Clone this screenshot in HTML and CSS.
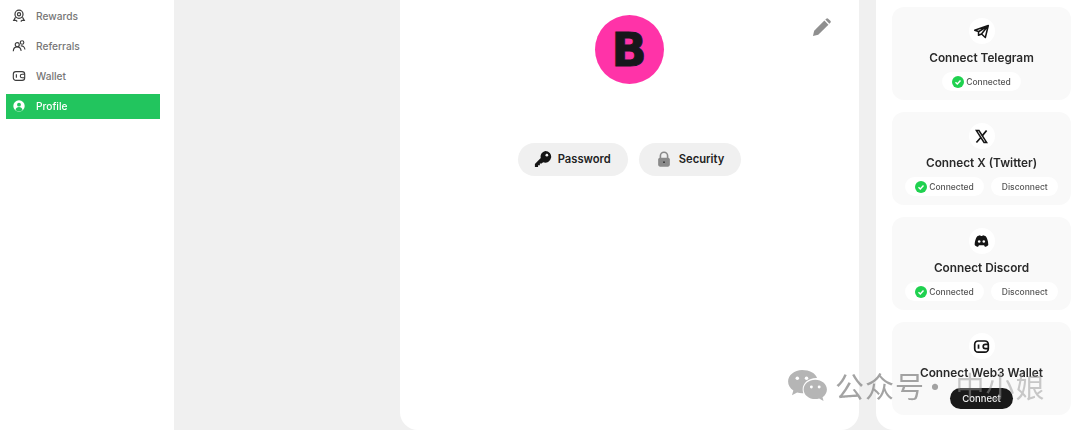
FILE: index.html
```html
<!DOCTYPE html>
<html lang="en">
<head>
  <meta charset="UTF-8">
  <meta name="viewport" content="width=device-width, initial-scale=1.0">
  <title>Profile</title>
  <link rel="stylesheet" href="styles.css">
</head>

<body>
  <div class="page">
    <nav class="sidebar">
      <a class="nav-item">
        <svg class="nav-icon" viewBox="0 0 16 16" fill="none" stroke="#3c3c3c" stroke-width="1.4"><circle cx="8" cy="6" r="4.6"/><circle cx="8" cy="6" r="1.8"/><path d="M4 9.5 2 13h2.5L6 14.3M12 9.5l2 3.5h-2.5L10 14.3"/></svg>
        Rewards
      </a>
      <a class="nav-item">
        <svg class="nav-icon" viewBox="0 0 16 16" fill="none" stroke="#3c3c3c" stroke-width="1.3"><circle cx="6" cy="6.5" r="2.3"/><circle cx="11.5" cy="4" r="2"/><path d="M1.5 14c0-3.5 2-5 4.5-5s4 1.5 4.500 4.500M10 8c2.500-.5 4.500 1 4.800 4"/></svg>
        Referrals
      </a>
      <a class="nav-item">
        <svg class="nav-icon" viewBox="0 0 16 16" fill="none" stroke="#3c3c3c" stroke-width="1.3"><rect x="1.500" y="3" width="13" height="10" rx="3"/><path d="M5 6v4M14.500 6h-3a2 2 0 0 0 0 4h3"/></svg>
        Wallet
      </a>
      <a class="nav-item active">
        <svg class="nav-icon" viewBox="0 0 16 16"><circle cx="8" cy="8" r="6.500" fill="#fff"/><circle cx="8" cy="6.500" r="2.200" fill="#22c55e"/><path d="M4 12.500c.5-2.500 2-3.300 4-3.300s3.500.8 4 3.300a6 6 0 0 1-8 0z" fill="#22c55e"/></svg>
        Profile
      </a>
    </nav>

    <main class="content">
      <svg class="edit-icon" viewBox="0 0 20 20"><path d="M1 19l1.300-5.600L13 2.700l4.300 4.300L6.600 17.700z" fill="#8f8f8f"/><path d="M14 1.700l1-1a1.400 1.400 0 0 1 2 0l2.300 2.300a1.400 1.400 0 0 1 0 2l-1 1z" fill="#8f8f8f"/></svg>
      <div class="avatar"><span>B</span></div>
      <div class="tab-row">
        <button class="tab">
          <svg class="tab-icon" viewBox="0 0 20 20"><path d="M12.500 1a6.500 6.500 0 1 1-2.400 12.500L8.500 15H6.500v2h-2v2H1v-3.500l6.500-6.500A6.500 6.500 0 0 1 12.500 1z" fill="#151515"/><circle cx="14.300" cy="5.700" r="1.500" fill="#f0f0f0"/></svg>
          Password
        </button>
        <button class="tab">
          <svg class="tab-icon" viewBox="0 0 20 20"><path d="M6 9V6.500a4 4 0 0 1 8 0V9" fill="none" stroke="#8a8a8a" stroke-width="1.800"/><rect x="3.500" y="8.500" width="13" height="10" rx="2" fill="#8a8a8a"/><circle cx="10" cy="13.500" r="1" fill="#333"/></svg>
          Security
        </button>
      </div>
    </main>

    <aside class="connections">
      <section class="card">
        <div class="card-icon">
          <svg viewBox="0 0 20 20" fill="none" stroke="#151515" stroke-width="1.800" stroke-linejoin="round"><path d="M2 8.500 18 3l-3.500 14-4.500-4-3.500 1.500V10zM7 10l11-7-8 10"/></svg>
        </div>
        <h3>Connect Telegram</h3>
        <div class="card-actions">
          <span class="pill"><i class="check"><svg viewBox="0 0 12 12" fill="none" stroke="#fff" stroke-width="1.400"><path d="M3.500 6.200 5.300 8l3.200-3.500"/></svg></i>Connected</span>
        </div>
      </section>

      <section class="card">
        <div class="card-icon">
          <svg viewBox="0 0 20 20" fill="none" stroke="#151515"><path d="M4 3h3l9 14h-3z" stroke-width="1.800"/><path d="M16 3l-5 6M9 11.500 4 17" stroke-width="2"/></svg>
        </div>
        <h3>Connect X (Twitter)</h3>
        <div class="card-actions">
          <span class="pill"><i class="check"><svg viewBox="0 0 12 12" fill="none" stroke="#fff" stroke-width="1.400"><path d="M3.500 6.200 5.300 8l3.200-3.500"/></svg></i>Connected</span>
          <span class="pill">Disconnect</span>
        </div>
      </section>

      <section class="card">
        <div class="card-icon">
          <svg viewBox="0 0 20 20"><path d="M5.500 3.500c1.500-.6 2.600-.9 3-.9l.5 1h2l.5-1c.5 0 1.600.3 3 .9 1.800 1.300 3.500 6 3.500 10.500-1 1.300-2.500 2-4 2.300l-1-1.800H7l-1 1.800c-1.500-.3-3-1-4-2.300C2 9.500 3.700 4.800 5.500 3.500z" fill="#151515"/><circle cx="7.300" cy="10" r="1.500" fill="#fff"/><circle cx="12.700" cy="10" r="1.500" fill="#fff"/></svg>
        </div>
        <h3>Connect Discord</h3>
        <div class="card-actions">
          <span class="pill"><i class="check"><svg viewBox="0 0 12 12" fill="none" stroke="#fff" stroke-width="1.400"><path d="M3.500 6.200 5.300 8l3.200-3.500"/></svg></i>Connected</span>
          <span class="pill">Disconnect</span>
        </div>
      </section>

      <section class="card">
        <div class="card-icon">
          <svg viewBox="0 0 20 20" fill="none" stroke="#151515" stroke-width="2"><rect x="2" y="3.500" width="16" height="13" rx="4"/><path d="M6.500 7.500v5M18 7.500h-3.500a2.500 2.500 0 0 0 0 5H18"/></svg>
        </div>
        <h3>Connect Web3 Wallet</h3>
        <div class="card-actions">
          <button class="connect-btn">Connect</button>
        </div>
      </section>
    </aside>
  </div>

  <div class="watermark">
    <svg class="wechat" viewBox="0 0 42 34"><path d="M15.500 1C7.500 1 1 6.300 1 13c0 3.800 2.100 7 5.400 9.200L5 27l5.300-2.800c1.700.5 3.400.8 5.200.8h1.200c-.5-1.300-.7-2.600-.7-4 0-6.600 6.200-11.800 13.800-11.800h1C29.300 4.300 23 1 15.500 1z" fill="#b5b5b5"/><path d="M41 21c0-5.500-5.400-10-12-10s-12 4.500-12 10 5.400 10 12 10c1.400 0 2.700-.2 4-.6L37.500 33l-1-4C39.300 27 41 24.200 41 21z" fill="#b5b5b5"/><circle cx="10.500" cy="9.500" r="1.800" fill="#fff"/><circle cx="20" cy="9.500" r="1.800" fill="#fff"/><circle cx="25" cy="18.500" r="1.500" fill="#fff"/><circle cx="33" cy="18.500" r="1.500" fill="#fff"/></svg>
    <span>公众号 <b>·</b> <em>中小娘</em></span>
  </div>
</body>
</html>
```

FILE: styles.css
```css
* {
  box-sizing: border-box;
}

html, body {
  height: 100%;
}

body {
  margin: 0;
  background-color: #f0f0f0;
  color: #1c1c1c;
  font-family: "Inter", "Noto Sans CJK SC", sans-serif;
  overflow: hidden;
  position: relative;
}

.page {
  display: flex;
  height: 430px;
  filter: blur(0.35px);
}

.sidebar {
  width: 174px;
  flex: none;
  background-color: #fff;
  padding: 4px 14px 0 6px;
  display: flex;
  flex-direction: column;
  gap: 5px;
}

.nav-item {
  display: flex;
  align-items: center;
  gap: 10px;
  height: 25px;
  padding: 0 0 2px 6px;
  font-size: 10.2px;
  font-weight: 500;
  color: #777;
}

.nav-item.active {
  background-color: #22c55e;
  color: #fff;
}

.nav-icon {
  width: 14px;
  height: 14px;
  flex: none;
}

.content {
  width: 459px;
  flex: none;
  margin-left: 226px;
  background-color: #fff;
  border-radius: 0 0 18px 18px;
  position: relative;
  display: flex;
  flex-direction: column;
  align-items: center;
  padding-top: 15px;
}

.edit-icon {
  position: absolute;
  top: 18px;
  right: 28px;
  width: 19px;
  height: 19px;
}

.avatar {
  width: 69px;
  height: 69px;
  border-radius: 50%;
  background-color: #ff33a8;
  display: flex;
  align-items: center;
  justify-content: center;
  margin-right: 1px;
}

.avatar span {
  font-family: "DejaVu Sans", sans-serif;
  font-size: 46px;
  font-weight: 700;
  line-height: 1;
  color: #17171b;
  -webkit-text-stroke: 1px #17171b;
}

.tab-row {
  display: flex;
  gap: 11px;
  margin-top: 59px;
}

.tab {
  display: flex;
  align-items: center;
  gap: 6px;
  height: 33px;
  padding: 0 17px 2px 16px;
  border: none;
  border-radius: 17px;
  background-color: #f0f0f0;
  color: #222;
  font-family: inherit;
  font-size: 11.2px;
  font-weight: 600;
}

.tab-icon {
  width: 18px;
  height: 18px;
}

.connections {
  width: 204px;
  flex: none;
  margin-left: 17px;
  background-color: #fff;
  border-radius: 0 0 0 18px;
  padding: 7px 9px 0 16px;
  display: flex;
  flex-direction: column;
  gap: 12px;
}

.card {
  height: 93px;
  background-color: #f9f9f9;
  border-radius: 12px;
  display: flex;
  flex-direction: column;
  align-items: center;
  padding-top: 11px;
}

.card-icon {
  width: 26px;
  height: 26px;
  border-radius: 50%;
  background-color: #fff;
  display: flex;
  align-items: center;
  justify-content: center;
}

.card-icon svg {
  width: 17px;
  height: 17px;
}

.card h3 {
  margin: 7px 0 7px;
  font-size: 11.8px;
  line-height: 14px;
  font-weight: 600;
  color: #2a2a2a;
}

.card-actions {
  display: flex;
  gap: 7px;
}

.pill {
  display: flex;
  align-items: center;
  gap: 2px;
  height: 19px;
  padding: 0 10.5px;
  border-radius: 10px;
  background-color: #fff;
  font-size: 8.5px;
  font-weight: 500;
  color: #555;
}

.check {
  width: 12px;
  height: 12px;
  border-radius: 50%;
  background-color: #1fd14f;
  display: block;
}

.check svg {
  display: block;
}

.connect-btn {
  height: 21px;
  width: 63px;
  margin-top: 1px;
  border: none;
  border-radius: 11px;
  background-color: #1a1a1a;
  color: #eee;
  font-family: inherit;
  font-size: 9.5px;
  font-weight: 500;
}

.watermark {
  position: absolute;
  left: 787px;
  top: 369px;
  display: flex;
  align-items: center;
  gap: 7px;
}

.wechat {
  width: 41px;
  height: 33px;
}

.watermark span {
  font-family: "Noto Sans CJK SC", sans-serif;
  font-size: 29px;
  line-height: 33px;
  color: rgba(140, 140, 140, 0.8);
  letter-spacing: 1px;
  word-spacing: -8px;
  white-space: nowrap;
}

.watermark b {
  font-weight: 400;
  margin: 0 5px 0 -4px;
}

.watermark em {
  font-style: normal;
  color: rgba(150, 150, 150, 0.5);
}
```
